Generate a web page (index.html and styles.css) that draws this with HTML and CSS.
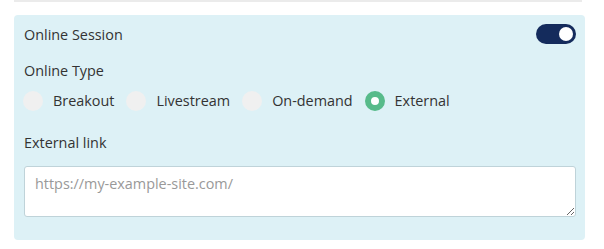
FILE: index.html
```
<!DOCTYPE html>
<html lang="en">
<head>
    <meta charset="UTF-8">
    <meta name="viewport" content="width=device-width, initial-scale=1.0">
    <title>Online Session</title>
    <link rel="stylesheet" href="styles.css">
</head>
<body>
    <div class="wrap">
        <div class="divider"></div>

        <div class="panel">
            <div class="panel-head">
                <span>Online Session</span>
                <label class="switch">
                    <input type="checkbox" checked>
                    <span class="slider"></span>
                </label>
            </div>

            <div class="field-label">Online Type</div>
            <div class="radio-row">
                <label class="radio"><input type="radio" name="type"><span class="dot"></span>Breakout</label>
                <label class="radio"><input type="radio" name="type"><span class="dot"></span>Livestream</label>
                <label class="radio"><input type="radio" name="type"><span class="dot"></span>On-demand</label>
                <label class="radio"><input type="radio" name="type" checked><span class="dot"></span>External</label>
            </div>

            <div class="field-label link-label">External link</div>
            <textarea class="link-input" placeholder="https://my-example-site.com/"></textarea>
        </div>
    </div>
</body>
</html>
```

FILE: styles.css
```
body {
    margin: 0;
    background: #fff;
    font-family: "Open Sans", "Noto Sans", sans-serif;
    font-size: 14.4px;
    color: #333;
}
.wrap {
    width: 571px;
    margin-left: 14px;
}
.divider {
    height: 2px;
    background: #ebebeb;
    margin-right: 3px;
}
.panel {
    margin-top: 13px;
    background: #ddf1f6;
    border-radius: 4px;
    padding: 9px 9px 23px 10px;
}
.panel-head {
    display: flex;
    justify-content: space-between;
    align-items: center;
    height: 20px;
}
.switch {
    position: relative;
    width: 40px;
    height: 20px;
    cursor: pointer;
}
.switch input {
    display: none;
}
.slider {
    position: absolute;
    inset: 0;
    background: #c9d3dc;
    border-radius: 10px;
}
.slider::after {
    content: "";
    position: absolute;
    top: 3px;
    left: 3px;
    width: 14px;
    height: 14px;
    border-radius: 50%;
    background: #fff;
}
.switch input:checked + .slider {
    background: #142b5c;
}
.switch input:checked + .slider::after {
    left: 23px;
}
.field-label {
    margin-top: 17px;
    line-height: 20px;
}
.radio-row {
    display: flex;
    margin-top: 10px;
    height: 20px;
}
.radio {
    display: flex;
    align-items: center;
    line-height: 20px;
    margin-right: 13px;
    cursor: pointer;
}
.radio input {
    display: none;
}
.dot {
    width: 20px;
    height: 20px;
    border-radius: 50%;
    background: #f0f0f0;
    margin-right: 10px;
    margin-left: -1px;
    box-sizing: border-box;
}
.radio input:checked + .dot {
    border: 6px solid #57bb8a;
    background: #fff;
}
.link-label {
    margin-top: 22px;
}
.link-input {
    display: block;
    margin-top: 13px;
    width: 100%;
    height: 51px;
    box-sizing: border-box;
    border: 1px solid #bfd3d9;
    border-radius: 3px;
    padding: 7px 10px;
    font-family: inherit;
    font-size: 14.4px;
    color: #333;
    background: #fff;
}
.link-input::placeholder {
    color: #999;
}
```
